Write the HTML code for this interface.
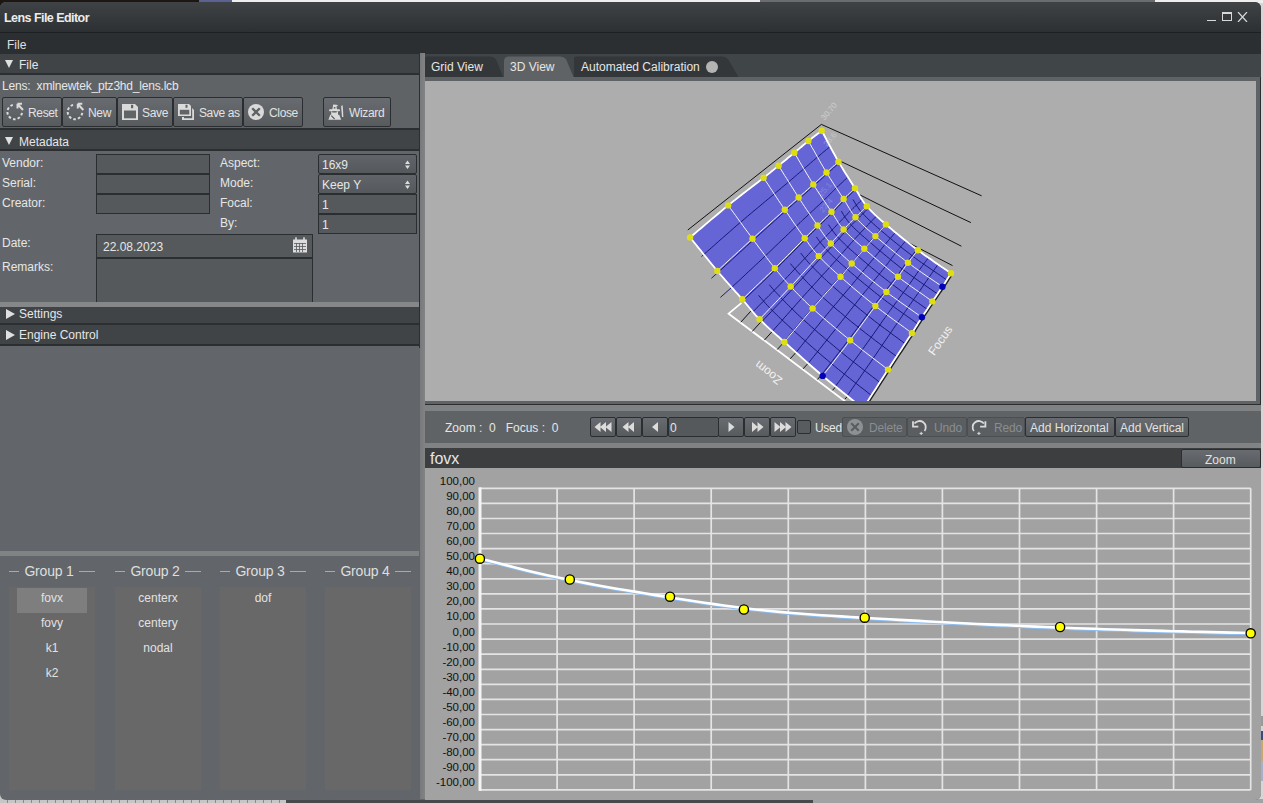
<!DOCTYPE html>
<html><head><meta charset="utf-8">
<style>
*{margin:0;padding:0;box-sizing:border-box}
html,body{width:1263px;height:803px;overflow:hidden;background:#d6d6d6;font-family:"Liberation Sans",sans-serif;font-size:12px;color:#e6e6e6}
.a{position:absolute}
#topstrip{left:0;top:0;width:1263px;height:3px;background:#1c1614}
#botstrip{left:0;top:799px;width:1263px;height:4px;background:#c9c9c9}
#win{left:0;top:2px;width:1261px;height:798px;background:#62666a;border-radius:6px 6px 6px 6px;overflow:hidden}
#title{left:0;top:0;width:1261px;height:31px;background:linear-gradient(#3f4346,#2c3033);border-bottom:1px solid #1d2022}
#title .t{left:4px;top:9px;font-weight:bold;font-size:12.5px;letter-spacing:-0.55px;color:#ececec}
#menu{left:0;top:31px;width:1261px;height:21px;background:#2b2f32}
#menu .t{left:7px;top:5px;color:#e0e0e0}
.hdr{background:#404447;border-bottom:2px solid #2c2f31;width:419px;left:0}
.hdr .t{left:19px;top:4px;color:#e6e6e6}
.tri{left:5px;top:6px;width:0;height:0;border-left:4.5px solid transparent;border-right:4.5px solid transparent;border-top:8px solid #e0e0e0}
.trir{left:6px;top:4px;width:0;height:0;border-top:5px solid transparent;border-bottom:5px solid transparent;border-left:9px solid #e0e0e0}
.btn{height:30px;top:95px;border:1px solid #2b2e30;border-radius:2px;background:linear-gradient(#686c70,#575b5e)}
.btn .t{top:8px;color:#e2e2e2;white-space:nowrap;letter-spacing:-0.35px}
.lbl{left:2px;color:#e6e6e6}
.dbtn{top:415px;height:20px;border:1px solid #4b4f52;border-radius:2px;background:#5a5e61}
.dbtn .t{top:3px;color:#8a8d90;letter-spacing:-0.2px}
.inp{background:#55595c;border:1px solid #2b2e30}
.combo{background:linear-gradient(#61656a,#55595c);border:1px solid #2b2e30;border-radius:2px}
</style></head><body>
<div class="a" style="left:0;top:0;width:199px;height:3px;background:#1d1713"></div>
<div class="a" style="left:0;top:0;width:10px;height:10px;background:#1d1713"></div>
<div class="a" style="left:0;top:790px;width:10px;height:13px;background:#c6c6c6"></div>
<div class="a" style="left:199px;top:0;width:33px;height:3px;background:#5b6190"></div>
<div class="a" style="left:232px;top:0;width:528px;height:3px;background:#eeeeee"></div>
<div class="a" style="left:760px;top:0;width:395px;height:3px;background:#6a6c70"></div>
<div class="a" style="left:1155px;top:0;width:108px;height:3px;background:#eeeeee"></div>
<div class="a" style="left:0;top:799px;width:286px;height:4px;background:repeating-linear-gradient(90deg,#c6c6c6 0,#c6c6c6 7px,#8c8c8c 7px,#8c8c8c 8px)"></div>
<div class="a" style="left:286px;top:799px;width:527px;height:4px;background:#47494b"></div>
<div class="a" style="left:813px;top:799px;width:450px;height:4px;background:#a0a2a4"></div>
<div class="a" style="left:1261px;top:716px;width:2px;height:10px;background:#9a9a9a"></div>
<div class="a" style="left:1261px;top:731px;width:2px;height:9px;background:#3c4a7a"></div>
<div class="a" style="left:1261px;top:740px;width:2px;height:21px;background:#c8a870"></div>
<div class="a" style="left:1261px;top:761px;width:2px;height:20px;background:#a8b0c8"></div>
<div class="a" id="win">
 <div class="a" id="title"><div class="a t">Lens File Editor</div>
  <div class="a" style="left:1207px;top:18px;width:9px;height:1px;background:#d8d8d8"></div>
  <div class="a" style="left:1222px;top:10px;width:10px;height:9px;border:1px solid #d8d8d8;border-top-width:2px"></div>
  <svg class="a" style="left:1237px;top:10px" width="11" height="10"><path d="M1,0 L10,10 M10,0 L1,10" stroke="#d8d8d8" stroke-width="1.2"/></svg>
 </div>
 <div class="a" id="menu"><div class="a t">File</div></div>
  <div class="a hdr" style="top:52px;height:21px"><div class="a tri"></div><div class="a t">File</div></div>
 <div class="a" style="left:0;top:73px;width:419px;height:22px;background:#5f6366"><div class="a lbl" style="top:4px;letter-spacing:-0.2px">Lens:&nbsp; xmlnewtek_ptz3hd_lens.lcb</div></div>
 <div class="a" style="left:0;top:95px;width:419px;height:31px;background:#5f6366"></div>
 <div class="a btn" style="left:2px;width:60px"><div class="a t" style="left:25px">Reset</div></div>
 <div class="a btn" style="left:62px;width:55px"><div class="a t" style="left:25px">New</div></div>
 <div class="a btn" style="left:117px;width:56px"><div class="a t" style="left:24px">Save</div></div>
 <div class="a btn" style="left:173px;width:70px"><div class="a t" style="left:25px;letter-spacing:-0.4px">Save as</div></div>
 <div class="a btn" style="left:243px;width:60px"><div class="a t" style="left:25px">Close</div></div>
 <div class="a btn" style="left:323px;width:68px"><div class="a t" style="left:25px">Wizard</div></div>
 <svg class="a" style="left:0;top:-2px" width="420" height="140">
  <g fill="none" stroke="#dadada" stroke-width="2">
   <path d="M12.8,104.9 A7.3,7.3 0 1 0 22,112.1" stroke-dasharray="2.6 2.1"/>
   <path d="M18,104.5 L23,110 M17.5,103.8 V108.5 M17.5,103.8 H22"/>
   <path d="M73.1,104.9 A7.3,7.3 0 1 0 82.3,112.1" stroke-dasharray="2.6 2.1"/>
   <path d="M78.3,104.5 L83.3,110 M77.8,103.8 V108.5 M77.8,103.8 H82.3"/>
  </g>
  <g fill="#dadada">
   <path d="M122,104 H135 L138,107 V120 H122 Z"/>
   <rect x="131" y="104.8" width="2.2" height="3.4" fill="#606467"/>
   <rect x="124" y="110.5" width="12" height="7.8" fill="#606467"/>
   <path d="M178,104 H189 L191,106 V116 H178 Z"/>
   <rect x="185.5" y="104.8" width="2" height="3" fill="#606467"/>
   <rect x="179.8" y="109.8" width="9.5" height="4.7" fill="#606467"/>
   <path d="M192,108 L194,110 V120 H182 V117 H184 V118.2 H192.2 V110.5 Z"/>
   <circle cx="256" cy="112" r="8"/>
   <path d="M332.2,110 L333.2,104.6 L336.5,104.8 L338.2,105.8 L336.4,106.4 L337.2,110 Z"/>
   <rect x="329" y="109.3" width="11" height="1.9" rx="0.9"/>
   <path d="M331.2,111.5 H338 V114.5 L334.6,118.8 L331.2,114.5 Z"/>
   <path d="M330.3,114.8 L328.4,119.8 H341.2 L339.2,114.8 Z"/>
   <path d="M341.1,106.2 L342.4,105 L342.8,106.8 L343.4,117 H342 Z"/>
  </g>
  <path d="M252.2,108.2 L259.8,115.8 M259.8,108.2 L252.2,115.8" stroke="#5e6265" stroke-width="2.3"/>
  <path d="M332.2,111.9 H336.6 M331.3,115.6 L334.6,119" stroke="#55595c" stroke-width="1.1" fill="none"/>
  <rect x="333.8" y="107" width="1.6" height="1.6" fill="#606467"/>
 </svg>
 <div class="a hdr" style="top:126px;height:23px;border-top:2px solid #2c2f31"><div class="a tri" style="top:7px"></div><div class="a t" style="top:5px">Metadata</div></div>
 <div class="a lbl" style="top:154px">Vendor:</div>
 <div class="a lbl" style="top:174px">Serial:</div>
 <div class="a lbl" style="top:194px">Creator:</div>
 <div class="a lbl" style="top:234px">Date:</div>
 <div class="a lbl" style="top:258px">Remarks:</div>
 <div class="a inp" style="left:96px;top:152px;width:114px;height:20px"></div>
 <div class="a inp" style="left:96px;top:172px;width:114px;height:20px"></div>
 <div class="a inp" style="left:96px;top:192px;width:114px;height:20px"></div>
 <div class="a inp" style="left:96px;top:232px;width:217px;height:24px"><div class="a" style="left:6px;top:5px">22.08.2023</div></div>
 <div class="a inp" style="left:96px;top:256px;width:217px;height:46px;border-bottom:none"></div>
 <div class="a lbl" style="left:220px;top:154px">Aspect:</div>
 <div class="a lbl" style="left:220px;top:174px">Mode:</div>
 <div class="a lbl" style="left:220px;top:194px">Focal:</div>
 <div class="a lbl" style="left:220px;top:214px">By:</div>
 <div class="a combo" style="left:318px;top:152px;width:99px;height:20px"><div class="a" style="left:3px;top:3px">16x9</div></div>
 <div class="a combo" style="left:318px;top:172px;width:99px;height:20px"><div class="a" style="left:3px;top:3px">Keep Y</div></div>
 <div class="a inp" style="left:318px;top:192px;width:99px;height:20px"><div class="a" style="left:3px;top:3px">1</div></div>
 <div class="a inp" style="left:318px;top:212px;width:99px;height:20px"><div class="a" style="left:3px;top:3px">1</div></div>
 <div class="a" style="left:0;top:300px;width:419px;height:5px;background:#858789"></div>
 <div class="a hdr" style="top:305px;height:18px"><div class="a trir" style="top:2px"></div><div class="a t" style="top:0px">Settings</div></div>
 <div class="a hdr" style="top:323px;height:21px"><div class="a trir" style="top:5px"></div><div class="a t" style="top:3px">Engine Control</div></div>
 <div class="a" style="left:0;top:549px;width:419px;height:5px;background:#808284"></div>
 <div class="a" style="left:420px;top:51px;width:5px;height:746px;background:linear-gradient(90deg,#77797b,#818385)"></div>
 <div class="a" style="left:419px;top:52px;width:1px;height:294px;background:#2b2f31"></div>
 <svg class="a" style="left:0;top:-2px" width="420" height="320">
  <g fill="#dcdcdc">
   <path d="M405,164 L407.5,160.5 L410,164 Z M405,165.5 L407.5,169 L410,165.5 Z"/>
   <path d="M405,184 L407.5,180.5 L410,184 Z M405,185.5 L407.5,189 L410,185.5 Z"/>
  </g>
  <g>
   <rect x="293" y="239.5" width="14" height="13" fill="#dcdcdc"/>
   <rect x="295.2" y="237.3" width="1.6" height="3" fill="#dcdcdc"/>
   <rect x="303.2" y="237.3" width="1.6" height="3" fill="#dcdcdc"/>
   <path d="M294,243.5 H306 M294,246.5 H306 M294,249.5 H306 M296.5,243 V252 M299.5,243 V252 M302.5,243 V252" stroke="#55595c" stroke-width="0.8"/>
  </g>
 </svg>
 <div class="a" style="left:9px;top:585px;width:86px;height:203px;background:#686869"></div>
 <div class="a" style="left:9px;top:569px;width:10px;height:1px;background:#a8aaab"></div>
 <div class="a" style="left:79px;top:569px;width:16px;height:1px;background:#a8aaab"></div>
 <div class="a" style="left:6px;top:561px;width:86px;text-align:center;font-size:14px;letter-spacing:-0.2px;color:#dedede">Group 1</div>
 <div class="a" style="left:17px;top:586px;width:70px;height:25px;background:#7e7e7e"></div>
 <div class="a" style="left:9px;top:589px;width:86px;text-align:center;color:#e2e2e2">fovx</div>
 <div class="a" style="left:9px;top:614px;width:86px;text-align:center;color:#e2e2e2">fovy</div>
 <div class="a" style="left:9px;top:639px;width:86px;text-align:center;color:#e2e2e2">k1</div>
 <div class="a" style="left:9px;top:664px;width:86px;text-align:center;color:#e2e2e2">k2</div>
 <div class="a" style="left:115px;top:585px;width:86px;height:203px;background:#686869"></div>
 <div class="a" style="left:115px;top:569px;width:10px;height:1px;background:#a8aaab"></div>
 <div class="a" style="left:185px;top:569px;width:16px;height:1px;background:#a8aaab"></div>
 <div class="a" style="left:112px;top:561px;width:86px;text-align:center;font-size:14px;letter-spacing:-0.2px;color:#dedede">Group 2</div>
 <div class="a" style="left:115px;top:589px;width:86px;text-align:center;color:#e2e2e2">centerx</div>
 <div class="a" style="left:115px;top:614px;width:86px;text-align:center;color:#e2e2e2">centery</div>
 <div class="a" style="left:115px;top:639px;width:86px;text-align:center;color:#e2e2e2">nodal</div>
 <div class="a" style="left:220px;top:585px;width:86px;height:203px;background:#686869"></div>
 <div class="a" style="left:220px;top:569px;width:10px;height:1px;background:#a8aaab"></div>
 <div class="a" style="left:290px;top:569px;width:16px;height:1px;background:#a8aaab"></div>
 <div class="a" style="left:217px;top:561px;width:86px;text-align:center;font-size:14px;letter-spacing:-0.2px;color:#dedede">Group 3</div>
 <div class="a" style="left:220px;top:589px;width:86px;text-align:center;color:#e2e2e2">dof</div>
 <div class="a" style="left:325px;top:585px;width:86px;height:203px;background:#686869"></div>
 <div class="a" style="left:325px;top:569px;width:10px;height:1px;background:#a8aaab"></div>
 <div class="a" style="left:395px;top:569px;width:16px;height:1px;background:#a8aaab"></div>
 <div class="a" style="left:322px;top:561px;width:86px;text-align:center;font-size:14px;letter-spacing:-0.2px;color:#dedede">Group 4</div>

  <div class="a" style="left:425px;top:52px;width:836px;height:23px;background:#404548"></div>
 <svg class="a" style="left:0;top:-2px" width="1263" height="803">
  <path d="M425,77 L425,58 Q425,56.5 427,56.5 L490,56.5 Q494,56.5 496,59 L503,77 Z" fill="#33373a"/>
  <path d="M574,77 L574,58 Q574,56.5 576,56.5 L722,56.5 Q726,56.5 728,59 L738.5,77 Z" fill="#33373a"/>
  <path d="M504,77 L504,61 Q504,56.5 509,56.5 L560,56.5 Q564,56.5 566,59 L573.5,77 Z" fill="#5f6366"/>
  <circle cx="712" cy="67" r="6" fill="#b4b4b4"/>
 </svg>
 <div class="a" style="left:431px;top:58px">Grid View</div>
 <div class="a" style="left:510px;top:58px">3D View</div>
 <div class="a" style="left:581px;top:58px">Automated Calibration</div>
 <div class="a" style="left:425px;top:75px;width:836px;height:328px;background:#5f6366;border-right:1px solid #2b2f31;border-bottom:1.5px solid #2b2f31"></div>
 <div class="a" style="left:425px;top:79px;width:831px;height:320px;background:#adadad;overflow:hidden">
  <svg class="a" style="left:-425px;top:-81px" width="1263" height="803">
  <g stroke="#111" stroke-width="1" fill="none">
   <path d="M687.8,230 L821.4,124.4 L981.6,195.8"/>
   <path d="M832,157.3 L970.9,222.6"/>
   <path d="M852,190.9 L961.4,246.2"/>
   <path d="M904.7,240.8 L952.5,265.6"/>
  </g>
  <path d="M741.5,302.9 L728.6,313.6 L852,406.5" stroke="#ffffff" stroke-width="1.8" fill="none"/>
<path d="M740.8,322.2 l10,-11 M752.2,331.5 l10,-11 M764.4,340.1 l10,-11 M777.3,349.5 l10,-11 M790.2,358.8 l10,-11 M803.1,368.8 l10,-11 M817.4,379.5 l10,-11 M832.5,390.3 l10,-11 M845.0,399.0 l10,-11" stroke="#111" stroke-width="1" fill="none"/>
  <path d="M951.0,273.3 L950.1,274.6 L949.3,276.0 L948.5,277.3 L947.6,278.6 L946.8,280.0 L945.9,281.3 L945.1,282.7 L944.2,284.0 L943.3,285.4 L942.4,286.8 L941.5,288.2 L940.5,289.6 L939.5,291.1 L938.5,292.5 L937.5,293.9 L936.5,295.4 L935.5,296.9 L934.5,298.4 L933.4,299.9 L932.4,301.4 L931.4,302.9 L930.3,304.5 L929.3,306.1 L928.2,307.7 L927.2,309.3 L926.1,310.9 L925.0,312.5 L924.0,314.1 L922.9,315.7 L921.9,317.3 L920.9,318.8 L920.1,320.1 L919.3,321.4 L918.5,322.6 L917.7,323.9 L916.9,325.3 L915.9,326.8 L914.8,328.6 L913.5,330.7 L911.9,333.1 L910.1,335.9 L908.0,339.0 L905.8,342.5 L903.4,346.1 L900.9,349.9 L898.3,353.8 L895.7,357.8 L893.1,361.8 L890.5,365.8 L888.0,369.6 L885.5,373.4 L883.1,377.2 L880.6,381.1 L878.1,385.0 L875.6,388.9 L873.1,392.8 L870.5,396.8 L868.0,400.7 L865.5,404.6 L863.0,408.5" stroke="#222" stroke-width="4.6" fill="none"/>
<path d="M821.7,130.7 L823.4,133.8 L825.1,137.0 L826.7,140.1 L828.4,143.3 L830.1,146.5 L831.8,149.6 L833.5,152.7 L835.2,155.8 L836.8,158.8 L838.5,161.7 L840.2,164.6 L841.9,167.4 L843.6,170.2 L845.3,173.0 L847.1,175.8 L848.8,178.4 L850.4,181.0 L852.0,183.5 L853.5,185.9 L855.0,188.2 L856.3,190.3 L857.5,192.3 L858.7,194.2 L859.7,196.0 L860.7,197.7 L861.8,199.4 L862.9,201.1 L864.0,202.7 L865.3,204.4 L866.8,206.2 L868.4,208.0 L869.9,209.7 L871.6,211.4 L873.3,213.1 L875.1,214.8 L877.0,216.6 L879.0,218.4 L881.1,220.3 L883.4,222.3 L885.9,224.4 L888.6,226.7 L891.5,229.1 L894.5,231.7 L897.7,234.3 L901.0,237.0 L904.4,239.7 L907.8,242.4 L911.2,245.1 L914.6,247.7 L917.9,250.2 L921.2,252.6 L924.4,255.0 L927.7,257.3 L931.1,259.6 L934.4,261.9 L937.7,264.2 L941.0,266.5 L944.4,268.7 L947.7,271.0 L951.0,273.3 L951.0,273.3 L950.1,274.6 L949.3,276.0 L948.5,277.3 L947.6,278.6 L946.8,280.0 L945.9,281.3 L945.1,282.7 L944.2,284.0 L943.3,285.4 L942.4,286.8 L941.5,288.2 L940.5,289.6 L939.5,291.1 L938.5,292.5 L937.5,293.9 L936.5,295.4 L935.5,296.9 L934.5,298.4 L933.4,299.9 L932.4,301.4 L931.4,302.9 L930.3,304.5 L929.3,306.1 L928.2,307.7 L927.2,309.3 L926.1,310.9 L925.0,312.5 L924.0,314.1 L922.9,315.7 L921.9,317.3 L920.9,318.8 L920.1,320.1 L919.3,321.4 L918.5,322.6 L917.7,323.9 L916.9,325.3 L915.9,326.8 L914.8,328.6 L913.5,330.7 L911.9,333.1 L910.1,335.9 L908.0,339.0 L905.8,342.5 L903.4,346.1 L900.9,349.9 L898.3,353.8 L895.7,357.8 L893.1,361.8 L890.5,365.8 L888.0,369.6 L885.5,373.4 L883.1,377.2 L880.6,381.1 L878.1,385.0 L875.6,388.9 L873.1,392.8 L870.5,396.8 L868.0,400.7 L865.5,404.6 L863.0,408.5 L863.0,408.5 L859.0,405.2 L854.9,402.0 L850.8,398.8 L846.8,395.5 L842.7,392.3 L838.7,389.0 L834.6,385.8 L830.6,382.5 L826.6,379.2 L822.7,375.9 L818.7,372.5 L814.7,369.0 L810.6,365.5 L806.6,361.9 L802.6,358.3 L798.7,354.8 L794.8,351.4 L791.2,348.1 L787.7,344.9 L784.4,342.0 L781.3,339.3 L778.5,336.7 L775.7,334.3 L773.1,332.0 L770.7,329.8 L768.3,327.6 L766.1,325.6 L763.9,323.5 L761.7,321.4 L759.6,319.3 L757.6,317.2 L755.8,315.3 L754.1,313.4 L752.5,311.5 L751.0,309.7 L749.4,307.8 L747.8,305.8 L746.1,303.8 L744.3,301.6 L742.3,299.3 L740.1,296.8 L737.8,294.2 L735.4,291.6 L733.0,288.8 L730.4,285.9 L727.8,283.0 L725.2,280.1 L722.6,277.0 L719.9,274.0 L717.3,270.9 L714.7,267.8 L712.0,264.5 L709.3,261.2 L706.6,257.9 L703.8,254.5 L701.1,251.0 L698.3,247.6 L695.6,244.2 L692.8,240.8 L690.1,237.4 L690.1,237.4 L693.9,234.2 L697.8,230.9 L701.6,227.7 L705.5,224.4 L709.3,221.1 L713.2,217.9 L717.0,214.7 L720.8,211.5 L724.5,208.4 L728.2,205.4 L731.9,202.4 L735.8,199.4 L739.7,196.3 L743.5,193.3 L747.3,190.4 L751.0,187.5 L754.6,184.8 L757.9,182.3 L760.9,179.9 L763.6,177.8 L765.9,176.0 L767.9,174.4 L769.6,173.1 L771.0,171.9 L772.3,170.8 L773.5,169.9 L774.7,168.9 L775.9,167.9 L777.2,166.9 L778.6,165.7 L780.1,164.4 L781.7,163.1 L783.3,161.8 L784.9,160.5 L786.5,159.2 L788.1,157.8 L789.7,156.5 L791.3,155.2 L792.8,154.0 L794.3,152.7 L795.8,151.5 L797.2,150.3 L798.7,149.1 L800.1,147.9 L801.5,146.7 L802.9,145.5 L804.3,144.4 L805.7,143.2 L807.0,142.1 L808.4,141.0 L809.8,139.9 L811.1,138.9 L812.4,137.8 L813.8,136.8 L815.1,135.8 L816.4,134.8 L817.7,133.7 L819.1,132.7 L820.4,131.7 L821.7,130.7Z" fill="#6565d5"/>
<path d="M830.1,146.5 L828.9,147.5 L827.6,148.6 L826.4,149.6 L825.1,150.7 L823.9,151.7 L822.6,152.7 L821.4,153.8 L820.1,154.9 L818.8,156.0 L817.5,157.1 L816.2,158.2 L814.9,159.3 L813.5,160.5 L812.2,161.6 L810.8,162.8 L809.5,164.0 L808.1,165.2 L806.7,166.4 L805.3,167.6 L803.8,168.8 L802.4,170.1 L800.9,171.4 L799.4,172.7 L797.8,174.0 L796.3,175.3 L794.8,176.6 L793.2,178.0 L791.7,179.3 L790.2,180.6 L788.7,181.8 L787.3,183.0 L786.1,184.1 L784.9,185.0 L783.8,186.0 L782.6,186.9 L781.4,188.0 L780.0,189.2 L778.4,190.5 L776.5,192.1 L774.3,194.0 L771.7,196.1 L768.8,198.5 L765.7,201.1 L762.3,203.9 L758.8,206.9 L755.1,209.9 L751.4,213.0 L747.7,216.1 L744.1,219.2 L740.5,222.3 L736.9,225.3 L733.3,228.5 L729.7,231.7 L726.0,234.9 L722.3,238.1 L718.6,241.4 L714.9,244.7 L711.2,248.0 L707.5,251.2 L703.8,254.5 M839.2,162.8 L838.0,163.9 L836.8,165.0 L835.6,166.1 L834.4,167.1 L833.3,168.2 L832.1,169.3 L830.9,170.3 L829.7,171.4 L828.5,172.5 L827.2,173.7 L825.9,174.8 L824.7,176.0 L823.4,177.1 L822.1,178.3 L820.8,179.5 L819.5,180.7 L818.1,181.9 L816.8,183.1 L815.4,184.3 L814.0,185.6 L812.6,186.9 L811.2,188.1 L809.7,189.5 L808.2,190.8 L806.8,192.1 L805.3,193.5 L803.8,194.8 L802.3,196.1 L800.8,197.4 L799.4,198.7 L798.1,199.9 L796.9,200.9 L795.8,201.9 L794.7,202.8 L793.6,203.8 L792.4,204.9 L791.1,206.0 L789.5,207.4 L787.7,209.0 L785.6,210.9 L783.2,213.1 L780.4,215.6 L777.4,218.3 L774.2,221.2 L770.9,224.2 L767.4,227.3 L763.9,230.5 L760.4,233.7 L756.9,236.9 L753.4,240.0 L750.0,243.0 L746.6,246.2 L743.1,249.4 L739.6,252.6 L736.1,255.9 L732.5,259.1 L729.0,262.4 L725.4,265.7 L721.9,268.9 L718.3,272.1 M847.9,177.1 L846.8,178.2 L845.6,179.2 L844.5,180.3 L843.3,181.3 L842.2,182.4 L841.0,183.5 L839.9,184.5 L838.7,185.6 L837.5,186.8 L836.3,187.9 L835.1,189.1 L833.9,190.3 L832.7,191.5 L831.5,192.7 L830.2,194.0 L829.0,195.2 L827.7,196.5 L826.4,197.8 L825.1,199.1 L823.8,200.4 L822.4,201.7 L821.0,203.0 L819.6,204.4 L818.1,205.7 L816.6,207.1 L815.2,208.4 L813.7,209.8 L812.3,211.2 L810.8,212.5 L809.4,213.8 L808.2,215.0 L807.0,216.1 L805.9,217.1 L804.9,218.0 L803.9,219.0 L802.7,220.1 L801.4,221.3 L800.0,222.7 L798.3,224.3 L796.2,226.3 L793.9,228.5 L791.2,231.1 L788.3,233.9 L785.3,236.8 L782.0,239.9 L778.7,243.1 L775.3,246.3 L771.9,249.6 L768.6,252.8 L765.3,255.9 L762.1,259.0 L758.8,262.1 L755.4,265.2 L752.1,268.4 L748.7,271.5 L745.3,274.7 L741.9,277.9 L738.5,281.1 L735.1,284.2 L731.7,287.4 M855.7,189.3 L854.6,190.4 L853.4,191.4 L852.3,192.5 L851.2,193.5 L850.0,194.6 L848.9,195.6 L847.8,196.7 L846.6,197.8 L845.5,198.9 L844.3,200.1 L843.1,201.3 L842.0,202.5 L840.8,203.8 L839.6,205.0 L838.4,206.3 L837.2,207.6 L836.0,208.9 L834.8,210.3 L833.5,211.6 L832.2,212.9 L830.9,214.2 L829.5,215.6 L828.1,217.0 L826.7,218.4 L825.3,219.8 L823.9,221.2 L822.4,222.6 L821.0,223.9 L819.6,225.3 L818.3,226.6 L817.0,227.9 L815.9,229.0 L814.9,230.0 L813.9,230.9 L812.9,232.0 L811.8,233.0 L810.6,234.3 L809.1,235.7 L807.5,237.4 L805.5,239.3 L803.2,241.6 L800.7,244.2 L797.9,247.0 L795.0,250.0 L791.9,253.2 L788.7,256.4 L785.4,259.7 L782.1,263.0 L778.9,266.2 L775.7,269.4 L772.6,272.4 L769.4,275.5 L766.2,278.6 L763.0,281.7 L759.7,284.9 L756.4,288.0 L753.1,291.1 L749.9,294.2 L746.6,297.4 L743.3,300.5 M862.0,199.7 L860.9,200.8 L859.7,201.9 L858.6,203.0 L857.5,204.0 L856.3,205.1 L855.2,206.2 L854.1,207.3 L852.9,208.4 L851.8,209.5 L850.6,210.7 L849.5,211.9 L848.3,213.0 L847.1,214.2 L845.9,215.5 L844.8,216.7 L843.6,218.0 L842.4,219.2 L841.1,220.5 L839.9,221.8 L838.6,223.1 L837.4,224.4 L836.1,225.8 L834.7,227.2 L833.4,228.6 L832.1,230.0 L830.7,231.4 L829.4,232.8 L828.0,234.2 L826.7,235.6 L825.4,237.0 L824.2,238.2 L823.2,239.3 L822.2,240.3 L821.2,241.2 L820.2,242.2 L819.1,243.3 L817.9,244.5 L816.6,245.9 L815.0,247.6 L813.1,249.6 L810.9,251.9 L808.4,254.5 L805.8,257.3 L803.0,260.3 L800.0,263.5 L796.9,266.7 L793.8,270.0 L790.7,273.3 L787.6,276.6 L784.5,279.8 L781.5,282.9 L778.4,286.1 L775.2,289.3 L772.1,292.5 L768.9,295.7 L765.6,299.0 L762.4,302.2 L759.2,305.4 L756.0,308.7 L752.8,311.9 M868.5,208.2 L867.4,209.3 L866.3,210.4 L865.2,211.5 L864.0,212.6 L862.9,213.7 L861.8,214.8 L860.7,215.9 L859.6,217.0 L858.4,218.1 L857.3,219.3 L856.1,220.5 L855.0,221.6 L853.8,222.8 L852.6,224.0 L851.4,225.2 L850.3,226.4 L849.1,227.7 L847.9,228.9 L846.7,230.2 L845.4,231.5 L844.2,232.8 L842.9,234.2 L841.7,235.6 L840.4,237.1 L839.1,238.5 L837.8,240.0 L836.5,241.4 L835.2,242.8 L833.9,244.2 L832.7,245.6 L831.5,246.8 L830.5,247.9 L829.5,248.9 L828.6,249.9 L827.6,250.9 L826.6,251.9 L825.4,253.1 L824.1,254.6 L822.5,256.2 L820.7,258.2 L818.6,260.5 L816.2,263.1 L813.6,266.0 L810.8,269.0 L807.9,272.2 L804.9,275.5 L801.9,278.8 L798.8,282.2 L795.7,285.5 L792.8,288.7 L789.8,291.9 L786.8,295.1 L783.7,298.4 L780.6,301.7 L777.5,305.0 L774.4,308.3 L771.3,311.7 L768.1,315.0 L765.0,318.3 L761.9,321.6 M876.4,216.0 L875.3,217.2 L874.2,218.3 L873.2,219.4 L872.1,220.6 L871.0,221.7 L869.9,222.8 L868.8,224.0 L867.7,225.1 L866.6,226.3 L865.5,227.4 L864.4,228.6 L863.3,229.8 L862.2,231.0 L861.0,232.2 L859.9,233.4 L858.8,234.7 L857.6,235.9 L856.4,237.2 L855.2,238.5 L854.0,239.8 L852.8,241.2 L851.6,242.6 L850.3,244.0 L849.0,245.5 L847.7,247.0 L846.4,248.5 L845.1,249.9 L843.8,251.4 L842.6,252.8 L841.3,254.2 L840.2,255.5 L839.2,256.6 L838.3,257.6 L837.4,258.6 L836.5,259.6 L835.6,260.8 L834.4,262.0 L833.1,263.4 L831.6,265.1 L829.8,267.2 L827.7,269.5 L825.3,272.2 L822.6,275.0 L819.8,278.1 L816.9,281.4 L813.9,284.7 L810.8,288.1 L807.7,291.5 L804.7,294.8 L801.8,298.1 L798.9,301.3 L796.0,304.6 L793.1,307.9 L790.1,311.2 L787.2,314.6 L784.2,317.9 L781.3,321.3 L778.3,324.6 L775.3,328.0 L772.4,331.3 M885.6,224.2 L884.6,225.3 L883.6,226.5 L882.5,227.7 L881.5,228.8 L880.4,230.0 L879.4,231.1 L878.3,232.3 L877.3,233.5 L876.2,234.7 L875.1,235.9 L874.1,237.1 L873.0,238.3 L871.9,239.5 L870.8,240.8 L869.7,242.0 L868.6,243.3 L867.5,244.6 L866.4,245.9 L865.2,247.2 L864.0,248.6 L862.8,250.0 L861.6,251.4 L860.3,252.9 L859.0,254.4 L857.7,255.9 L856.4,257.4 L855.1,258.9 L853.9,260.4 L852.6,261.8 L851.4,263.3 L850.3,264.6 L849.4,265.7 L848.5,266.8 L847.6,267.8 L846.8,268.8 L845.8,270.0 L844.8,271.3 L843.5,272.7 L842.0,274.5 L840.2,276.6 L838.1,279.0 L835.7,281.7 L833.1,284.6 L830.3,287.8 L827.3,291.1 L824.3,294.5 L821.2,297.9 L818.2,301.4 L815.2,304.8 L812.3,308.1 L809.5,311.4 L806.7,314.7 L803.9,318.1 L801.0,321.4 L798.2,324.8 L795.4,328.2 L792.6,331.6 L789.7,335.0 L786.9,338.4 L784.1,341.7 M895.5,232.4 L894.4,233.6 L893.4,234.8 L892.4,236.0 L891.4,237.2 L890.3,238.3 L889.3,239.5 L888.3,240.7 L887.2,241.9 L886.2,243.1 L885.2,244.4 L884.1,245.6 L883.1,246.9 L882.0,248.2 L881.0,249.5 L879.9,250.8 L878.9,252.1 L877.8,253.4 L876.7,254.8 L875.6,256.1 L874.4,257.5 L873.3,258.9 L872.0,260.4 L870.8,261.9 L869.6,263.4 L868.3,264.9 L867.0,266.4 L865.8,268.0 L864.5,269.4 L863.3,270.9 L862.1,272.4 L861.0,273.7 L860.1,274.8 L859.2,275.9 L858.3,277.0 L857.5,278.0 L856.5,279.2 L855.5,280.5 L854.2,282.0 L852.7,283.8 L851.0,285.9 L848.9,288.4 L846.6,291.1 L844.0,294.2 L841.3,297.4 L838.4,300.8 L835.5,304.3 L832.5,307.8 L829.5,311.4 L826.6,314.9 L823.8,318.3 L821.0,321.6 L818.3,325.0 L815.5,328.4 L812.7,331.8 L809.9,335.2 L807.1,338.7 L804.3,342.1 L801.5,345.6 L798.8,349.0 L796.0,352.4 M905.8,240.8 L904.7,242.0 L903.7,243.2 L902.7,244.4 L901.7,245.6 L900.7,246.8 L899.7,248.0 L898.7,249.2 L897.6,250.5 L896.6,251.7 L895.6,253.0 L894.6,254.3 L893.6,255.6 L892.6,256.9 L891.6,258.3 L890.6,259.6 L889.5,261.0 L888.5,262.4 L887.5,263.8 L886.4,265.2 L885.3,266.6 L884.1,268.1 L883.0,269.5 L881.8,271.0 L880.6,272.5 L879.3,274.1 L878.1,275.6 L876.9,277.1 L875.6,278.6 L874.4,280.1 L873.3,281.5 L872.2,282.9 L871.2,284.1 L870.4,285.1 L869.5,286.2 L868.6,287.3 L867.7,288.4 L866.6,289.8 L865.4,291.3 L863.9,293.1 L862.2,295.3 L860.2,297.8 L857.9,300.7 L855.5,303.8 L852.8,307.1 L850.1,310.6 L847.3,314.2 L844.4,317.9 L841.5,321.5 L838.7,325.1 L835.9,328.6 L833.2,332.0 L830.5,335.4 L827.7,338.9 L824.9,342.4 L822.2,345.9 L819.4,349.4 L816.6,352.9 L813.8,356.4 L811.0,359.8 L808.2,363.3 M916.9,249.5 L915.9,250.7 L914.9,251.9 L913.9,253.2 L913.0,254.4 L912.0,255.6 L911.0,256.8 L910.0,258.1 L909.0,259.3 L908.0,260.6 L907.0,261.9 L906.0,263.3 L905.0,264.6 L904.0,266.0 L903.1,267.4 L902.1,268.8 L901.1,270.2 L900.1,271.7 L899.1,273.1 L898.0,274.5 L897.0,276.0 L895.9,277.5 L894.7,279.0 L893.6,280.5 L892.4,282.0 L891.2,283.5 L890.0,285.1 L888.8,286.6 L887.7,288.1 L886.5,289.6 L885.3,291.1 L884.3,292.4 L883.3,293.6 L882.4,294.7 L881.6,295.8 L880.7,296.9 L879.7,298.1 L878.7,299.5 L877.4,301.1 L876.0,302.9 L874.3,305.1 L872.4,307.8 L870.2,310.7 L867.8,313.9 L865.3,317.3 L862.7,320.9 L859.9,324.6 L857.2,328.4 L854.4,332.1 L851.6,335.8 L849.0,339.4 L846.3,342.9 L843.6,346.4 L840.9,349.9 L838.1,353.5 L835.4,357.1 L832.6,360.6 L829.8,364.2 L827.0,367.8 L824.3,371.3 L821.5,374.9 M928.4,257.8 L927.5,259.1 L926.5,260.3 L925.6,261.6 L924.6,262.8 L923.7,264.1 L922.7,265.4 L921.8,266.6 L920.8,267.9 L919.8,269.3 L918.9,270.6 L917.9,272.0 L916.9,273.3 L916.0,274.8 L915.0,276.2 L914.0,277.6 L913.0,279.0 L912.0,280.5 L911.0,282.0 L910.0,283.4 L909.0,284.9 L907.9,286.4 L906.8,287.9 L905.7,289.5 L904.5,291.0 L903.4,292.6 L902.2,294.1 L901.1,295.7 L899.9,297.2 L898.8,298.7 L897.7,300.2 L896.7,301.6 L895.7,302.9 L894.9,304.0 L894.0,305.2 L893.2,306.3 L892.2,307.6 L891.2,309.0 L890.0,310.6 L888.6,312.5 L887.0,314.8 L885.1,317.5 L882.9,320.5 L880.6,323.8 L878.2,327.3 L875.6,331.0 L872.9,334.8 L870.2,338.6 L867.5,342.4 L864.8,346.2 L862.2,349.9 L859.6,353.5 L857.0,357.1 L854.3,360.7 L851.6,364.4 L848.9,368.1 L846.2,371.7 L843.5,375.4 L840.8,379.1 L838.1,382.8 L835.4,386.4 M938.0,264.4 L937.1,265.7 L936.2,267.0 L935.3,268.3 L934.4,269.6 L933.5,270.9 L932.6,272.2 L931.7,273.5 L930.8,274.8 L929.8,276.2 L928.9,277.5 L927.9,278.9 L927.0,280.3 L926.0,281.7 L925.0,283.1 L924.0,284.6 L923.0,286.0 L922.0,287.5 L921.0,289.0 L920.0,290.5 L919.0,292.0 L917.9,293.5 L916.8,295.0 L915.7,296.6 L914.6,298.1 L913.5,299.7 L912.4,301.3 L911.3,302.9 L910.2,304.4 L909.1,306.0 L908.0,307.5 L907.0,309.0 L906.1,310.3 L905.3,311.4 L904.5,312.6 L903.6,313.8 L902.7,315.1 L901.7,316.6 L900.6,318.3 L899.2,320.3 L897.6,322.6 L895.7,325.4 L893.6,328.4 L891.4,331.8 L888.9,335.3 L886.4,339.1 L883.7,342.9 L881.1,346.8 L878.4,350.7 L875.8,354.6 L873.2,358.3 L870.7,362.0 L868.1,365.7 L865.5,369.4 L862.9,373.2 L860.3,377.0 L857.7,380.7 L855.0,384.5 L852.4,388.3 L849.8,392.1 L847.2,395.8 M703.8,254.5 L701.5,256.5 M718.3,272.1 L711.4,278.3 M731.7,287.4 L720.4,297.4 M853.0,199.5 L854.0,201.2 L854.9,202.8 L855.9,204.4 L856.9,206.0 L858.0,207.5 L859.1,209.1 L860.4,210.7 L861.8,212.4 L863.3,214.1 L864.8,215.7 L866.4,217.3 L868.0,218.9 L869.7,220.5 L871.5,222.1 L873.4,223.8 L875.4,225.6 L877.5,227.5 L879.8,229.4 L882.2,231.5 L884.8,233.7 L887.6,236.1 L890.5,238.5 L893.5,241.0 L896.6,243.5 L899.8,246.0 L902.9,248.6 L906.1,251.1 L909.3,253.5 L912.4,255.9 L915.4,258.2 L918.5,260.5 L921.6,262.7 L924.8,264.9 L927.9,267.0 L931.1,269.2 L934.2,271.3 L937.4,273.5 L940.5,275.6 L943.7,277.8 L946.8,280.0 M841.4,211.2 L842.4,212.9 L843.4,214.5 L844.3,216.0 L845.3,217.5 L846.4,219.1 L847.5,220.6 L848.8,222.3 L850.3,224.0 L851.8,225.6 L853.4,227.3 L855.0,228.9 L856.7,230.5 L858.5,232.2 L860.4,233.9 L862.4,235.7 L864.5,237.5 L866.7,239.4 L869.1,241.5 L871.6,243.6 L874.2,245.9 L877.1,248.4 L880.1,250.9 L883.2,253.5 L886.4,256.2 L889.6,258.8 L892.8,261.5 L896.1,264.1 L899.3,266.7 L902.5,269.1 L905.6,271.5 L908.8,273.8 L912.0,276.1 L915.1,278.4 L918.3,280.6 L921.5,282.9 L924.7,285.1 L927.9,287.3 L931.1,289.5 L934.3,291.7 L937.5,293.9 M828.5,224.7 L829.6,226.3 L830.6,227.8 L831.6,229.3 L832.6,230.8 L833.8,232.3 L835.0,233.9 L836.4,235.5 L837.9,237.2 L839.5,238.9 L841.1,240.6 L842.8,242.3 L844.5,244.0 L846.3,245.7 L848.2,247.5 L850.2,249.3 L852.4,251.2 L854.6,253.2 L857.1,255.3 L859.6,257.5 L862.4,259.9 L865.4,262.4 L868.5,265.1 L871.7,267.8 L875.0,270.5 L878.3,273.3 L881.7,276.0 L885.1,278.7 L888.4,281.3 L891.7,283.9 L894.9,286.3 L898.1,288.7 L901.3,291.1 L904.5,293.4 L907.7,295.7 L911.0,297.9 L914.2,300.2 L917.5,302.5 L920.7,304.7 L923.9,307.0 L927.2,309.3 M816.3,236.9 L817.5,238.5 L818.6,240.1 L819.7,241.6 L820.8,243.1 L822.1,244.6 L823.4,246.1 L824.8,247.8 L826.4,249.5 L828.0,251.3 L829.7,253.0 L831.4,254.8 L833.2,256.5 L835.1,258.3 L837.1,260.2 L839.1,262.0 L841.3,264.0 L843.6,266.1 L846.1,268.2 L848.7,270.5 L851.5,273.0 L854.5,275.5 L857.6,278.2 L860.9,280.9 L864.2,283.7 L867.6,286.4 L871.0,289.2 L874.4,292.0 L877.8,294.7 L881.1,297.3 L884.4,299.8 L887.7,302.3 L891.0,304.7 L894.3,307.2 L897.7,309.6 L901.0,312.0 L904.4,314.3 L907.7,316.7 L911.1,319.1 L914.4,321.5 L917.7,323.9 M800.7,253.0 L801.9,254.6 L803.1,256.1 L804.3,257.6 L805.5,259.1 L806.8,260.6 L808.2,262.2 L809.7,263.8 L811.4,265.6 L813.1,267.4 L814.8,269.2 L816.6,271.0 L818.4,272.8 L820.3,274.7 L822.3,276.6 L824.4,278.6 L826.6,280.6 L828.9,282.8 L831.5,285.0 L834.1,287.4 L837.0,289.9 L840.1,292.6 L843.3,295.4 L846.7,298.2 L850.1,301.1 L853.6,304.0 L857.1,306.9 L860.6,309.8 L864.1,312.6 L867.5,315.4 L870.8,318.0 L874.2,320.7 L877.6,323.3 L881.0,325.8 L884.4,328.4 L887.9,330.9 L891.3,333.5 L894.7,336.0 L898.2,338.5 L901.6,341.1 L905.0,343.6 M790.4,263.6 L791.7,265.2 L793.0,266.7 L794.3,268.2 L795.6,269.7 L796.9,271.2 L798.4,272.8 L799.9,274.5 L801.6,276.3 L803.3,278.1 L805.0,280.0 L806.7,281.8 L808.5,283.6 L810.4,285.5 L812.4,287.5 L814.4,289.5 L816.6,291.6 L819.0,293.8 L821.5,296.1 L824.3,298.6 L827.2,301.2 L830.4,304.0 L833.7,306.8 L837.1,309.8 L840.7,312.7 L844.3,315.8 L847.9,318.8 L851.5,321.8 L855.1,324.7 L858.6,327.5 L862.0,330.2 L865.4,332.9 L868.9,335.6 L872.3,338.2 L875.8,340.9 L879.3,343.5 L882.7,346.1 L886.2,348.7 L889.6,351.3 L893.1,353.9 L896.6,356.5 M769.4,284.8 L770.8,286.5 L772.2,288.1 L773.5,289.6 L774.9,291.2 L776.4,292.8 L777.9,294.4 L779.6,296.2 L781.3,298.1 L783.1,299.9 L784.9,301.8 L786.8,303.7 L788.7,305.6 L790.6,307.5 L792.6,309.5 L794.8,311.6 L797.1,313.8 L799.5,316.1 L802.2,318.5 L805.0,321.1 L808.1,323.8 L811.3,326.7 L814.8,329.7 L818.3,332.8 L822.0,335.9 L825.7,339.1 L829.4,342.3 L833.2,345.4 L836.8,348.5 L840.5,351.5 L844.0,354.4 L847.5,357.3 L851.1,360.1 L854.7,362.9 L858.3,365.7 L861.8,368.5 L865.4,371.3 L869.0,374.0 L872.6,376.8 L876.2,379.6 L879.7,382.4 M758.6,295.3 L760.0,297.0 L761.5,298.7 L762.9,300.4 L764.3,302.0 L765.8,303.7 L767.3,305.4 L769.0,307.2 L770.9,309.1 L772.8,311.0 L774.7,312.9 L776.6,314.8 L778.6,316.7 L780.7,318.7 L782.8,320.7 L785.1,322.8 L787.5,325.0 L790.0,327.3 L792.7,329.8 L795.6,332.4 L798.7,335.1 L802.0,338.1 L805.5,341.1 L809.0,344.3 L812.7,347.5 L816.4,350.7 L820.1,354.0 L823.9,357.2 L827.6,360.3 L831.2,363.4 L834.8,366.4 L838.4,369.4 L842.1,372.3 L845.7,375.2 L849.4,378.1 L853.0,381.0 L856.7,383.9 L860.4,386.8 L864.1,389.6 L867.7,392.5 L871.4,395.4" fill="none" stroke="#10106e" stroke-width="0.9"/>
<path d="M821.7,130.7 L820.4,131.7 L819.1,132.7 L817.7,133.7 L816.4,134.8 L815.1,135.8 L813.8,136.8 L812.4,137.8 L811.1,138.9 L809.8,139.9 L808.4,141.0 L807.0,142.1 L805.7,143.2 L804.3,144.4 L802.9,145.5 L801.5,146.7 L800.1,147.9 L798.7,149.1 L797.2,150.3 L795.8,151.5 L794.3,152.7 L792.8,154.0 L791.3,155.2 L789.7,156.5 L788.1,157.8 L786.5,159.2 L784.9,160.5 L783.3,161.8 L781.7,163.1 L780.1,164.4 L778.6,165.7 L777.2,166.9 L775.9,167.9 L774.7,168.9 L773.5,169.9 L772.3,170.8 L771.0,171.9 L769.6,173.1 L767.9,174.4 L765.9,176.0 L763.6,177.8 L760.9,179.9 L757.9,182.3 L754.6,184.8 L751.0,187.5 L747.3,190.4 L743.5,193.3 L739.7,196.3 L735.8,199.4 L731.9,202.4 L728.2,205.4 L724.5,208.4 L720.8,211.5 L717.0,214.7 L713.2,217.9 L709.3,221.1 L705.5,224.4 L701.6,227.7 L697.8,230.9 L693.9,234.2 L690.1,237.4 M838.5,161.7 L837.3,162.8 L836.1,163.8 L834.9,164.9 L833.8,166.0 L832.6,167.0 L831.4,168.1 L830.2,169.2 L829.0,170.3 L827.7,171.4 L826.5,172.5 L825.2,173.6 L824.0,174.8 L822.7,176.0 L821.4,177.1 L820.1,178.3 L818.7,179.5 L817.4,180.7 L816.1,181.9 L814.7,183.2 L813.3,184.4 L811.9,185.7 L810.4,187.0 L809.0,188.3 L807.5,189.6 L806.0,190.9 L804.5,192.3 L803.0,193.6 L801.5,194.9 L800.0,196.2 L798.6,197.5 L797.3,198.7 L796.1,199.7 L795.0,200.7 L793.9,201.6 L792.8,202.6 L791.6,203.7 L790.3,204.8 L788.7,206.2 L786.9,207.8 L784.8,209.7 L782.3,211.9 L779.6,214.4 L776.6,217.1 L773.4,219.9 L770.0,223.0 L766.5,226.1 L763.0,229.2 L759.4,232.4 L755.9,235.6 L752.5,238.7 L749.1,241.8 L745.6,244.9 L742.2,248.1 L738.6,251.3 L735.1,254.6 L731.5,257.9 L728.0,261.1 L724.4,264.4 L720.8,267.7 L717.3,270.9 M855.0,188.2 L853.9,189.3 L852.7,190.3 L851.6,191.4 L850.5,192.4 L849.3,193.5 L848.2,194.5 L847.1,195.6 L845.9,196.7 L844.8,197.8 L843.6,199.0 L842.4,200.2 L841.3,201.4 L840.1,202.7 L838.9,203.9 L837.7,205.2 L836.5,206.5 L835.3,207.8 L834.1,209.2 L832.8,210.5 L831.5,211.8 L830.2,213.1 L828.8,214.5 L827.4,215.9 L826.0,217.3 L824.5,218.7 L823.1,220.0 L821.7,221.4 L820.3,222.8 L818.9,224.2 L817.5,225.5 L816.2,226.7 L815.1,227.8 L814.1,228.8 L813.1,229.8 L812.1,230.8 L811.0,231.9 L809.8,233.1 L808.3,234.6 L806.7,236.2 L804.7,238.2 L802.4,240.5 L799.9,243.1 L797.1,245.9 L794.1,248.9 L791.0,252.1 L787.8,255.3 L784.5,258.6 L781.2,261.9 L778.0,265.1 L774.8,268.2 L771.7,271.3 L768.5,274.3 L765.2,277.4 L762.0,280.6 L758.7,283.7 L755.4,286.8 L752.1,289.9 L748.8,293.1 L745.6,296.2 L742.3,299.3 M866.8,206.2 L865.7,207.3 L864.5,208.4 L863.4,209.5 L862.3,210.6 L861.2,211.7 L860.1,212.8 L858.9,213.9 L857.8,215.0 L856.7,216.1 L855.5,217.3 L854.3,218.5 L853.2,219.6 L852.0,220.8 L850.8,222.0 L849.6,223.2 L848.5,224.4 L847.3,225.7 L846.0,226.9 L844.8,228.2 L843.6,229.5 L842.4,230.8 L841.1,232.2 L839.8,233.6 L838.5,235.0 L837.2,236.5 L835.9,237.9 L834.6,239.3 L833.3,240.8 L832.1,242.1 L830.8,243.5 L829.6,244.7 L828.6,245.8 L827.6,246.8 L826.7,247.8 L825.7,248.8 L824.7,249.8 L823.5,251.1 L822.1,252.5 L820.6,254.1 L818.7,256.1 L816.6,258.4 L814.2,261.0 L811.6,263.8 L808.8,266.9 L805.9,270.0 L802.9,273.3 L799.8,276.6 L796.8,280.0 L793.7,283.3 L790.7,286.5 L787.7,289.7 L784.7,292.9 L781.6,296.2 L778.5,299.4 L775.3,302.8 L772.2,306.1 L769.0,309.4 L765.9,312.7 L762.7,316.0 L759.6,319.3 M885.9,224.4 L884.9,225.6 L883.8,226.7 L882.8,227.9 L881.7,229.0 L880.7,230.2 L879.6,231.3 L878.6,232.5 L877.5,233.7 L876.5,234.9 L875.4,236.1 L874.3,237.3 L873.2,238.5 L872.2,239.8 L871.1,241.0 L870.0,242.3 L868.9,243.5 L867.8,244.8 L866.6,246.1 L865.5,247.4 L864.3,248.8 L863.1,250.2 L861.9,251.6 L860.6,253.1 L859.3,254.6 L858.0,256.1 L856.7,257.6 L855.4,259.1 L854.2,260.6 L852.9,262.1 L851.7,263.5 L850.6,264.8 L849.6,266.0 L848.8,267.0 L847.9,268.0 L847.1,269.1 L846.1,270.2 L845.0,271.5 L843.8,273.0 L842.3,274.7 L840.5,276.8 L838.4,279.2 L836.0,281.9 L833.4,284.9 L830.6,288.0 L827.6,291.3 L824.6,294.7 L821.5,298.2 L818.5,301.7 L815.5,305.1 L812.6,308.4 L809.8,311.7 L807.0,315.0 L804.2,318.3 L801.3,321.7 L798.5,325.1 L795.7,328.5 L792.9,331.9 L790.0,335.2 L787.2,338.6 L784.4,342.0 M917.9,250.2 L916.9,251.4 L915.9,252.7 L914.9,253.9 L913.9,255.1 L913.0,256.4 L912.0,257.6 L911.0,258.8 L910.0,260.1 L909.0,261.4 L908.0,262.7 L907.0,264.0 L906.0,265.4 L905.1,266.8 L904.1,268.2 L903.1,269.6 L902.1,271.0 L901.1,272.4 L900.1,273.9 L899.1,275.3 L898.0,276.8 L896.9,278.3 L895.8,279.8 L894.6,281.3 L893.4,282.8 L892.3,284.4 L891.1,285.9 L889.9,287.4 L888.7,288.9 L887.5,290.4 L886.4,291.9 L885.3,293.3 L884.4,294.5 L883.5,295.6 L882.6,296.6 L881.8,297.8 L880.8,299.0 L879.7,300.3 L878.5,301.9 L877.1,303.8 L875.4,306.0 L873.5,308.6 L871.3,311.5 L868.9,314.8 L866.4,318.2 L863.8,321.8 L861.1,325.5 L858.3,329.3 L855.5,333.0 L852.8,336.7 L850.1,340.3 L847.4,343.8 L844.8,347.3 L842.0,350.9 L839.3,354.4 L836.5,358.0 L833.8,361.6 L831.0,365.2 L828.2,368.8 L825.4,372.3 L822.7,375.9 M951.0,273.3 L950.1,274.6 L949.3,276.0 L948.5,277.3 L947.6,278.6 L946.8,280.0 L945.9,281.3 L945.1,282.7 L944.2,284.0 L943.3,285.4 L942.4,286.8 L941.5,288.2 L940.5,289.6 L939.5,291.1 L938.5,292.5 L937.5,293.9 L936.5,295.4 L935.5,296.9 L934.5,298.4 L933.4,299.9 L932.4,301.4 L931.4,302.9 L930.3,304.5 L929.3,306.1 L928.2,307.7 L927.2,309.3 L926.1,310.9 L925.0,312.5 L924.0,314.1 L922.9,315.7 L921.9,317.3 L920.9,318.8 L920.1,320.1 L919.3,321.4 L918.5,322.6 L917.7,323.9 L916.9,325.3 L915.9,326.8 L914.8,328.6 L913.5,330.7 L911.9,333.1 L910.1,335.9 L908.0,339.0 L905.8,342.5 L903.4,346.1 L900.9,349.9 L898.3,353.8 L895.7,357.8 L893.1,361.8 L890.5,365.8 L888.0,369.6 L885.5,373.4 L883.1,377.2 L880.6,381.1 L878.1,385.0 L875.6,388.9 L873.1,392.8 L870.5,396.8 L868.0,400.7 L865.5,404.6 L863.0,408.5 M821.7,130.7 L823.4,133.8 L825.1,137.0 L826.7,140.1 L828.4,143.3 L830.1,146.5 L831.8,149.6 L833.5,152.7 L835.2,155.8 L836.8,158.8 L838.5,161.7 L840.2,164.6 L841.9,167.4 L843.6,170.2 L845.3,173.0 L847.1,175.8 L848.8,178.4 L850.4,181.0 L852.0,183.5 L853.5,185.9 L855.0,188.2 L856.3,190.3 L857.5,192.3 L858.7,194.2 L859.7,196.0 L860.7,197.7 L861.8,199.4 L862.9,201.1 L864.0,202.7 L865.3,204.4 L866.8,206.2 L868.4,208.0 L869.9,209.7 L871.6,211.4 L873.3,213.1 L875.1,214.8 L877.0,216.6 L879.0,218.4 L881.1,220.3 L883.4,222.3 L885.9,224.4 L888.6,226.7 L891.5,229.1 L894.5,231.7 L897.7,234.3 L901.0,237.0 L904.4,239.7 L907.8,242.4 L911.2,245.1 L914.6,247.7 L917.9,250.2 L921.2,252.6 L924.4,255.0 L927.7,257.3 L931.1,259.6 L934.4,261.9 L937.7,264.2 L941.0,266.5 L944.4,268.7 L947.7,271.0 L951.0,273.3 M808.4,141.0 L810.2,144.2 L812.0,147.4 L813.9,150.6 L815.7,153.8 L817.5,157.1 L819.3,160.3 L821.1,163.4 L822.9,166.5 L824.7,169.6 L826.5,172.5 L828.3,175.4 L830.1,178.3 L831.9,181.1 L833.7,183.9 L835.4,186.6 L837.2,189.2 L838.9,191.8 L840.5,194.3 L842.1,196.7 L843.6,199.0 L845.0,201.2 L846.2,203.2 L847.3,205.1 L848.4,206.9 L849.4,208.6 L850.4,210.3 L851.5,212.0 L852.7,213.7 L854.0,215.5 L855.5,217.3 L857.1,219.1 L858.8,220.9 L860.5,222.7 L862.3,224.4 L864.2,226.2 L866.1,228.0 L868.2,229.9 L870.5,231.8 L872.9,233.9 L875.4,236.1 L878.1,238.5 L881.1,241.0 L884.2,243.6 L887.4,246.3 L890.8,249.1 L894.2,251.9 L897.7,254.7 L901.2,257.4 L904.6,260.1 L908.0,262.7 L911.4,265.2 L914.8,267.7 L918.2,270.1 L921.6,272.5 L925.1,274.9 L928.6,277.3 L932.0,279.6 L935.5,282.0 L939.0,284.4 L942.4,286.8 M794.3,152.7 L796.2,155.9 L798.1,159.1 L800.0,162.3 L801.9,165.6 L803.8,168.8 L805.8,172.0 L807.7,175.2 L809.6,178.3 L811.4,181.4 L813.3,184.4 L815.2,187.4 L817.1,190.3 L819.0,193.2 L820.9,196.1 L822.8,199.0 L824.7,201.7 L826.5,204.4 L828.3,207.0 L829.9,209.5 L831.5,211.8 L832.9,214.0 L834.2,215.9 L835.3,217.8 L836.4,219.5 L837.4,221.2 L838.4,222.8 L839.5,224.4 L840.7,226.0 L842.1,227.7 L843.6,229.5 L845.3,231.3 L847.0,233.1 L848.8,234.9 L850.6,236.7 L852.6,238.5 L854.7,240.4 L856.9,242.3 L859.2,244.4 L861.7,246.5 L864.3,248.8 L867.1,251.3 L870.2,253.9 L873.4,256.7 L876.8,259.5 L880.3,262.5 L883.8,265.4 L887.4,268.4 L891.0,271.3 L894.5,274.1 L898.0,276.8 L901.4,279.4 L904.8,281.9 L908.3,284.4 L911.7,286.9 L915.2,289.3 L918.6,291.7 L922.1,294.1 L925.5,296.5 L929.0,299.0 L932.4,301.4 M778.6,165.7 L780.6,168.9 L782.6,172.1 L784.6,175.4 L786.7,178.6 L788.7,181.8 L790.7,185.1 L792.7,188.2 L794.7,191.4 L796.6,194.5 L798.6,197.5 L800.6,200.5 L802.5,203.5 L804.5,206.5 L806.5,209.5 L808.5,212.4 L810.4,215.2 L812.3,218.0 L814.1,220.6 L815.8,223.1 L817.5,225.5 L819.0,227.7 L820.4,229.7 L821.7,231.6 L822.9,233.3 L824.0,235.0 L825.2,236.6 L826.4,238.3 L827.7,239.9 L829.2,241.7 L830.8,243.5 L832.5,245.4 L834.3,247.2 L836.1,249.1 L838.0,251.0 L839.9,252.8 L842.0,254.8 L844.2,256.8 L846.5,258.9 L849.0,261.2 L851.7,263.5 L854.6,266.0 L857.7,268.7 L861.1,271.5 L864.5,274.4 L868.1,277.4 L871.8,280.4 L875.5,283.3 L879.2,286.3 L882.8,289.1 L886.4,291.9 L889.9,294.6 L893.4,297.2 L897.0,299.7 L900.5,302.3 L904.1,304.8 L907.7,307.3 L911.2,309.8 L914.8,312.3 L918.3,314.8 L921.9,317.3 M763.6,177.8 L765.7,181.0 L767.9,184.2 L770.0,187.5 L772.1,190.7 L774.3,194.0 L776.4,197.2 L778.5,200.4 L780.6,203.5 L782.7,206.6 L784.8,209.7 L786.9,212.7 L789.0,215.8 L791.1,218.8 L793.1,221.9 L795.2,224.8 L797.2,227.7 L799.2,230.5 L801.1,233.2 L803.0,235.8 L804.7,238.2 L806.3,240.4 L807.8,242.4 L809.1,244.3 L810.4,246.0 L811.6,247.6 L812.8,249.2 L814.1,250.9 L815.5,252.5 L817.0,254.2 L818.7,256.1 L820.5,258.0 L822.4,259.9 L824.3,261.8 L826.2,263.8 L828.3,265.7 L830.5,267.8 L832.8,269.9 L835.2,272.1 L837.8,274.4 L840.5,276.8 L843.5,279.4 L846.6,282.1 L850.0,285.0 L853.4,288.0 L857.0,291.0 L860.7,294.1 L864.4,297.1 L868.1,300.2 L871.8,303.1 L875.4,306.0 L879.0,308.8 L882.6,311.6 L886.2,314.3 L889.9,317.0 L893.5,319.7 L897.2,322.4 L900.9,325.0 L904.6,327.7 L908.2,330.4 L911.9,333.1 M728.2,205.4 L730.6,208.7 L733.1,212.1 L735.6,215.5 L738.0,218.9 L740.5,222.3 L742.9,225.7 L745.4,229.0 L747.8,232.3 L750.2,235.5 L752.5,238.7 L754.8,241.9 L757.2,245.0 L759.5,248.2 L761.9,251.3 L764.2,254.4 L766.4,257.4 L768.6,260.3 L770.8,263.1 L772.8,265.7 L774.8,268.2 L776.6,270.5 L778.3,272.5 L779.9,274.4 L781.3,276.2 L782.8,277.8 L784.2,279.5 L785.7,281.1 L787.2,282.8 L788.9,284.6 L790.7,286.5 L792.6,288.5 L794.4,290.5 L796.3,292.5 L798.3,294.5 L800.3,296.6 L802.4,298.7 L804.7,301.0 L807.1,303.3 L809.8,305.8 L812.6,308.4 L815.7,311.2 L819.1,314.2 L822.7,317.3 L826.5,320.6 L830.4,323.9 L834.3,327.2 L838.3,330.6 L842.3,333.9 L846.3,337.2 L850.1,340.3 L853.9,343.3 L857.7,346.3 L861.4,349.3 L865.2,352.2 L869.0,355.1 L872.8,358.0 L876.6,360.9 L880.4,363.8 L884.2,366.7 L888.0,369.6 M690.1,237.4 L692.8,240.8 L695.6,244.2 L698.3,247.6 L701.1,251.0 L703.8,254.5 L706.6,257.9 L709.3,261.2 L712.0,264.5 L714.7,267.8 L717.3,270.9 L719.9,274.0 L722.6,277.0 L725.2,280.1 L727.8,283.0 L730.4,285.9 L733.0,288.8 L735.4,291.6 L737.8,294.2 L740.1,296.8 L742.3,299.3 L744.3,301.6 L746.1,303.8 L747.8,305.8 L749.4,307.8 L751.0,309.7 L752.5,311.5 L754.1,313.4 L755.8,315.3 L757.6,317.2 L759.6,319.3 L761.7,321.4 L763.9,323.5 L766.1,325.6 L768.3,327.6 L770.7,329.8 L773.1,332.0 L775.7,334.3 L778.5,336.7 L781.3,339.3 L784.4,342.0 L787.7,344.9 L791.2,348.1 L794.8,351.4 L798.7,354.8 L802.6,358.3 L806.6,361.9 L810.6,365.5 L814.7,369.0 L818.7,372.5 L822.7,375.9 L826.6,379.2 L830.6,382.5 L834.6,385.8 L838.7,389.0 L842.7,392.3 L846.8,395.5 L850.8,398.8 L854.9,402.0 L859.0,405.2 L863.0,408.5" fill="none" stroke="#f4f4f4" stroke-width="1.0"/>
<path d="M821.7,130.7 L820.4,131.7 L819.1,132.7 L817.7,133.7 L816.4,134.8 L815.1,135.8 L813.8,136.8 L812.4,137.8 L811.1,138.9 L809.8,139.9 L808.4,141.0 L807.0,142.1 L805.7,143.2 L804.3,144.4 L802.9,145.5 L801.5,146.7 L800.1,147.9 L798.7,149.1 L797.2,150.3 L795.8,151.5 L794.3,152.7 L792.8,154.0 L791.3,155.2 L789.7,156.5 L788.1,157.8 L786.5,159.2 L784.9,160.5 L783.3,161.8 L781.7,163.1 L780.1,164.4 L778.6,165.7 L777.2,166.9 L775.9,167.9 L774.7,168.9 L773.5,169.9 L772.3,170.8 L771.0,171.9 L769.6,173.1 L767.9,174.4 L765.9,176.0 L763.6,177.8 L760.9,179.9 L757.9,182.3 L754.6,184.8 L751.0,187.5 L747.3,190.4 L743.5,193.3 L739.7,196.3 L735.8,199.4 L731.9,202.4 L728.2,205.4 L724.5,208.4 L720.8,211.5 L717.0,214.7 L713.2,217.9 L709.3,221.1 L705.5,224.4 L701.6,227.7 L697.8,230.9 L693.9,234.2 L690.1,237.4 M821.7,130.7 L823.4,133.8 L825.1,137.0 L826.7,140.1 L828.4,143.3 L830.1,146.5 L831.8,149.6 L833.5,152.7 L835.2,155.8 L836.8,158.8 L838.5,161.7 L840.2,164.6 L841.9,167.4 L843.6,170.2 L845.3,173.0 L847.1,175.8 L848.8,178.4 L850.4,181.0 L852.0,183.5 L853.5,185.9 L855.0,188.2 L856.3,190.3 L857.5,192.3 L858.7,194.2 L859.7,196.0 L860.7,197.7 L861.8,199.4 L862.9,201.1 L864.0,202.7 L865.3,204.4 L866.8,206.2 L868.4,208.0 L869.9,209.7 L871.6,211.4 L873.3,213.1 L875.1,214.8 L877.0,216.6 L879.0,218.4 L881.1,220.3 L883.4,222.3 L885.9,224.4 L888.6,226.7 L891.5,229.1 L894.5,231.7 L897.7,234.3 L901.0,237.0 L904.4,239.7 L907.8,242.4 L911.2,245.1 L914.6,247.7 L917.9,250.2 L921.2,252.6 L924.4,255.0 L927.7,257.3 L931.1,259.6 L934.4,261.9 L937.7,264.2 L941.0,266.5 L944.4,268.7 L947.7,271.0 L951.0,273.3 M690.1,237.4 L692.8,240.8 L695.6,244.2 L698.3,247.6 L701.1,251.0 L703.8,254.5 L706.6,257.9 L709.3,261.2 L712.0,264.5 L714.7,267.8 L717.3,270.9 L719.9,274.0 L722.6,277.0 L725.2,280.1 L727.8,283.0 L730.4,285.9 L733.0,288.8 L735.4,291.6 L737.8,294.2 L740.1,296.8 L742.3,299.3 L744.3,301.6 L746.1,303.8 L747.8,305.8 L749.4,307.8 L751.0,309.7 L752.5,311.5 L754.1,313.4 L755.8,315.3 L757.6,317.2 L759.6,319.3 L761.7,321.4 L763.9,323.5 L766.1,325.6 L768.3,327.6 L770.7,329.8 L773.1,332.0 L775.7,334.3 L778.5,336.7 L781.3,339.3 L784.4,342.0 L787.7,344.9 L791.2,348.1 L794.8,351.4 L798.7,354.8 L802.6,358.3 L806.6,361.9 L810.6,365.5 L814.7,369.0 L818.7,372.5 L822.7,375.9 L826.6,379.2 L830.6,382.5 L834.6,385.8 L838.7,389.0 L842.7,392.3 L846.8,395.5 L850.8,398.8 L854.9,402.0 L859.0,405.2 L863.0,408.5 M951.0,273.3 L950.1,274.6 L949.3,276.0 L948.5,277.3 L947.6,278.6 L946.8,280.0 L945.9,281.3 L945.1,282.7 L944.2,284.0 L943.3,285.4 L942.4,286.8 L941.5,288.2 L940.5,289.6 L939.5,291.1 L938.5,292.5 L937.5,293.9 L936.5,295.4 L935.5,296.9 L934.5,298.4 L933.4,299.9 L932.4,301.4 L931.4,302.9 L930.3,304.5 L929.3,306.1 L928.2,307.7 L927.2,309.3 L926.1,310.9 L925.0,312.5 L924.0,314.1 L922.9,315.7 L921.9,317.3 L920.9,318.8 L920.1,320.1 L919.3,321.4 L918.5,322.6 L917.7,323.9 L916.9,325.3 L915.9,326.8 L914.8,328.6 L913.5,330.7 L911.9,333.1 L910.1,335.9 L908.0,339.0 L905.8,342.5 L903.4,346.1 L900.9,349.9 L898.3,353.8 L895.7,357.8 L893.1,361.8 L890.5,365.8 L888.0,369.6 L885.5,373.4 L883.1,377.2 L880.6,381.1 L878.1,385.0 L875.6,388.9 L873.1,392.8 L870.5,396.8 L868.0,400.7 L865.5,404.6 L863.0,408.5" fill="none" stroke="#ffffff" stroke-width="1.8"/>
<circle cx="821.7" cy="130.7" r="3.2" fill="#dede10"/>
<circle cx="808.4" cy="141.0" r="3.2" fill="#dede10"/>
<circle cx="794.3" cy="152.7" r="3.2" fill="#dede10"/>
<circle cx="778.6" cy="165.7" r="3.2" fill="#dede10"/>
<circle cx="763.6" cy="177.8" r="3.2" fill="#dede10"/>
<circle cx="728.2" cy="205.4" r="3.2" fill="#dede10"/>
<circle cx="690.1" cy="237.4" r="3.2" fill="#dede10"/>
<circle cx="838.5" cy="161.7" r="3.2" fill="#dede10"/>
<circle cx="826.5" cy="172.5" r="3.2" fill="#dede10"/>
<circle cx="813.3" cy="184.4" r="3.2" fill="#dede10"/>
<circle cx="798.6" cy="197.5" r="3.2" fill="#dede10"/>
<circle cx="784.8" cy="209.7" r="3.2" fill="#dede10"/>
<circle cx="752.5" cy="238.7" r="3.2" fill="#dede10"/>
<circle cx="717.3" cy="270.9" r="3.2" fill="#dede10"/>
<circle cx="855.0" cy="188.2" r="3.2" fill="#dede10"/>
<circle cx="843.6" cy="199.0" r="3.2" fill="#dede10"/>
<circle cx="831.5" cy="211.8" r="3.2" fill="#dede10"/>
<circle cx="817.5" cy="225.5" r="3.2" fill="#dede10"/>
<circle cx="804.7" cy="238.2" r="3.2" fill="#dede10"/>
<circle cx="774.8" cy="268.2" r="3.2" fill="#dede10"/>
<circle cx="742.3" cy="299.3" r="3.2" fill="#dede10"/>
<circle cx="866.8" cy="206.2" r="3.2" fill="#dede10"/>
<circle cx="855.5" cy="217.3" r="3.2" fill="#dede10"/>
<circle cx="843.6" cy="229.5" r="3.2" fill="#dede10"/>
<circle cx="830.8" cy="243.5" r="3.2" fill="#dede10"/>
<circle cx="818.7" cy="256.1" r="3.2" fill="#dede10"/>
<circle cx="790.7" cy="286.5" r="3.2" fill="#dede10"/>
<circle cx="759.6" cy="319.3" r="3.2" fill="#dede10"/>
<circle cx="885.9" cy="224.4" r="3.2" fill="#dede10"/>
<circle cx="875.4" cy="236.1" r="3.2" fill="#dede10"/>
<circle cx="864.3" cy="248.8" r="3.2" fill="#dede10"/>
<circle cx="851.7" cy="263.5" r="3.2" fill="#dede10"/>
<circle cx="840.5" cy="276.8" r="3.2" fill="#dede10"/>
<circle cx="812.6" cy="308.4" r="3.2" fill="#dede10"/>
<circle cx="784.4" cy="342.0" r="3.2" fill="#dede10"/>
<circle cx="917.9" cy="250.2" r="3.2" fill="#dede10"/>
<circle cx="908.0" cy="262.7" r="3.2" fill="#dede10"/>
<circle cx="898.0" cy="276.8" r="3.2" fill="#dede10"/>
<circle cx="886.4" cy="291.9" r="3.2" fill="#dede10"/>
<circle cx="875.4" cy="306.0" r="3.2" fill="#dede10"/>
<circle cx="850.1" cy="340.3" r="3.2" fill="#dede10"/>
<circle cx="822.7" cy="375.9" r="3.2" fill="#0000b8"/>
<circle cx="951.0" cy="273.3" r="3.2" fill="#dede10"/>
<circle cx="942.4" cy="286.8" r="3.2" fill="#0000b8"/>
<circle cx="932.4" cy="301.4" r="3.2" fill="#dede10"/>
<circle cx="921.9" cy="317.3" r="3.2" fill="#0000b8"/>
<circle cx="911.9" cy="333.1" r="3.2" fill="#dede10"/>
<circle cx="888.0" cy="369.6" r="3.2" fill="#dede10"/>
<circle cx="863.0" cy="408.5" r="3.2" fill="#dede10"/>
  <g font-family="Liberation Sans" font-size="8" fill="#ffffff" opacity="0.4" text-anchor="middle">
   <text transform="translate(831,113) rotate(-50)">30.70</text>
   <text transform="translate(832,141) rotate(-50)" opacity="0.7">28.6</text>
   <text transform="translate(827,191) rotate(-50)" opacity="0.5">25.1</text>
   <text transform="translate(828,207) rotate(-50)" opacity="0.5">22.4</text>
  </g>
  <text x="0" y="0" transform="translate(769,372) rotate(218)" text-anchor="middle" dominant-baseline="middle" font-family="Liberation Sans" font-size="12" fill="#f2f2f2">Zoom</text>
  <text x="0" y="0" transform="translate(941,341) rotate(-55)" text-anchor="middle" dominant-baseline="middle" font-family="Liberation Sans" font-size="12" fill="#f2f2f2">Focus</text>
  </svg>
 </div>
 <div class="a" style="left:425px;top:403px;width:836px;height:6px;background:#7f8182"></div>
 <div class="a" style="left:425px;top:409px;width:836px;height:32px;background:#5f6366"></div>
 <div class="a" style="left:445px;top:419px">Zoom :&nbsp; 0&nbsp;&nbsp; Focus :&nbsp; 0</div>
 <div class="a" style="left:425px;top:441px;width:836px;height:5px;background:#808284"></div>
 <div class="a" style="left:425px;top:446px;width:836px;height:20px;background:#3d3e40"><div class="a" style="left:5px;top:2px;font-size:16px">fovx</div></div>
 <div class="a" style="left:425px;top:466px;width:836px;height:332px;background:#a2a2a2"></div>
 <svg class="a" style="left:0;top:-2px" width="1263" height="803">
  <path d="M480.0,488.3 H1250.7 M480.0,503.4 H1250.7 M480.0,518.5 H1250.7 M480.0,533.5 H1250.7 M480.0,548.6 H1250.7 M480.0,563.7 H1250.7 M480.0,578.8 H1250.7 M480.0,593.9 H1250.7 M480.0,608.9 H1250.7 M480.0,624.0 H1250.7 M480.0,639.1 H1250.7 M480.0,654.2 H1250.7 M480.0,669.3 H1250.7 M480.0,684.3 H1250.7 M480.0,699.4 H1250.7 M480.0,714.5 H1250.7 M480.0,729.6 H1250.7 M480.0,744.7 H1250.7 M480.0,759.7 H1250.7 M480.0,774.8 H1250.7 M480.0,789.9 H1250.7 M480.0,488.3 V789.9 M557.1,488.3 V789.9 M634.1,488.3 V789.9 M711.2,488.3 V789.9 M788.3,488.3 V789.9 M865.4,488.3 V789.9 M942.4,488.3 V789.9 M1019.5,488.3 V789.9 M1096.6,488.3 V789.9 M1173.6,488.3 V789.9 M1250.7,488.3 V789.9" stroke="#e4e4e4" stroke-width="1.7" fill="none"/>
<rect x="478.5" y="487.3" width="3" height="303.6" fill="#f4f4f4"/>
<g font-family="Liberation Sans" font-size="11.5" fill="#111"><text x="475" y="484.7" text-anchor="end">100,00</text><text x="475" y="499.8" text-anchor="end">90,00</text><text x="475" y="514.9" text-anchor="end">80,00</text><text x="475" y="529.9" text-anchor="end">70,00</text><text x="475" y="545.0" text-anchor="end">60,00</text><text x="475" y="560.1" text-anchor="end">50,00</text><text x="475" y="575.2" text-anchor="end">40,00</text><text x="475" y="590.3" text-anchor="end">30,00</text><text x="475" y="605.3" text-anchor="end">20,00</text><text x="475" y="620.4" text-anchor="end">10,00</text><text x="475" y="635.5" text-anchor="end">0,00</text><text x="475" y="650.6" text-anchor="end">-10,00</text><text x="475" y="665.7" text-anchor="end">-20,00</text><text x="475" y="680.7" text-anchor="end">-30,00</text><text x="475" y="695.8" text-anchor="end">-40,00</text><text x="475" y="710.9" text-anchor="end">-50,00</text><text x="475" y="726.0" text-anchor="end">-60,00</text><text x="475" y="741.1" text-anchor="end">-70,00</text><text x="475" y="756.1" text-anchor="end">-80,00</text><text x="475" y="771.2" text-anchor="end">-90,00</text><text x="475" y="786.3" text-anchor="end">-100,00</text></g>
<path d="M479.9,558.4 L489.7,561.1 L499.4,563.6 L509.2,566.1 L518.9,568.6 L528.7,570.9 L538.4,573.2 L548.2,575.4 L558.0,577.5 L567.7,579.6 L577.5,581.5 L587.2,583.4 L597.0,585.2 L606.7,587.0 L616.5,588.7 L626.3,590.3 L636.0,591.9 L645.8,593.5 L655.5,595.1 L665.3,596.6 L675.0,598.2 L684.8,599.7 L694.6,601.2 L704.3,602.7 L714.1,604.1 L723.8,605.5 L733.6,606.8 L743.3,608.0 L753.1,609.2 L762.9,610.2 L772.6,611.2 L782.4,612.1 L792.1,613.0 L801.9,613.7 L811.6,614.5 L821.4,615.2 L831.2,615.8 L840.9,616.4 L850.7,617.0 L860.4,617.6 L870.2,618.2 L879.9,618.8 L889.7,619.3 L899.4,619.9 L909.2,620.4 L919.0,620.9 L928.7,621.5 L938.5,622.0 L948.2,622.5 L958.0,623.0 L967.7,623.5 L977.5,624.0 L987.3,624.4 L997.0,624.9 L1006.8,625.3 L1016.5,625.8 L1026.3,626.2 L1036.0,626.6 L1045.8,627.0 L1055.6,627.4 L1065.3,627.8 L1075.1,628.2 L1084.8,628.5 L1094.6,628.8 L1104.3,629.2 L1114.1,629.5 L1123.9,629.8 L1133.6,630.1 L1143.4,630.4 L1153.1,630.6 L1162.9,630.9 L1172.6,631.2 L1182.4,631.4 L1192.2,631.7 L1201.9,631.9 L1211.7,632.1 L1221.4,632.4 L1231.2,632.6 L1240.9,632.8 L1250.7,633.0" stroke="#8cbcf0" stroke-width="3.2" fill="none" transform="translate(0.3,0.7)"/>
<path d="M479.9,558.4 L489.7,561.1 L499.4,563.6 L509.2,566.1 L518.9,568.6 L528.7,570.9 L538.4,573.2 L548.2,575.4 L558.0,577.5 L567.7,579.6 L577.5,581.5 L587.2,583.4 L597.0,585.2 L606.7,587.0 L616.5,588.7 L626.3,590.3 L636.0,591.9 L645.8,593.5 L655.5,595.1 L665.3,596.6 L675.0,598.2 L684.8,599.7 L694.6,601.2 L704.3,602.7 L714.1,604.1 L723.8,605.5 L733.6,606.8 L743.3,608.0 L753.1,609.2 L762.9,610.2 L772.6,611.2 L782.4,612.1 L792.1,613.0 L801.9,613.7 L811.6,614.5 L821.4,615.2 L831.2,615.8 L840.9,616.4 L850.7,617.0 L860.4,617.6 L870.2,618.2 L879.9,618.8 L889.7,619.3 L899.4,619.9 L909.2,620.4 L919.0,620.9 L928.7,621.5 L938.5,622.0 L948.2,622.5 L958.0,623.0 L967.7,623.5 L977.5,624.0 L987.3,624.4 L997.0,624.9 L1006.8,625.3 L1016.5,625.8 L1026.3,626.2 L1036.0,626.6 L1045.8,627.0 L1055.6,627.4 L1065.3,627.8 L1075.1,628.2 L1084.8,628.5 L1094.6,628.8 L1104.3,629.2 L1114.1,629.5 L1123.9,629.8 L1133.6,630.1 L1143.4,630.4 L1153.1,630.6 L1162.9,630.9 L1172.6,631.2 L1182.4,631.4 L1192.2,631.7 L1201.9,631.9 L1211.7,632.1 L1221.4,632.4 L1231.2,632.6 L1240.9,632.8 L1250.7,633.0" stroke="#ffffff" stroke-width="2.6" fill="none"/>
<circle cx="479.9" cy="558.7" r="4.6" fill="#ffff00" stroke="#000" stroke-width="1.4"/>
<circle cx="569.8" cy="579.5" r="4.6" fill="#ffff00" stroke="#000" stroke-width="1.4"/>
<circle cx="670" cy="596.7" r="4.6" fill="#ffff00" stroke="#000" stroke-width="1.4"/>
<circle cx="743.9" cy="609.5" r="4.6" fill="#ffff00" stroke="#000" stroke-width="1.4"/>
<circle cx="864.7" cy="617.7" r="4.6" fill="#ffff00" stroke="#000" stroke-width="1.4"/>
<circle cx="1060.1" cy="627" r="4.6" fill="#ffff00" stroke="#000" stroke-width="1.4"/>
<circle cx="1250.7" cy="633.3" r="4.6" fill="#ffff00" stroke="#000" stroke-width="1.4"/>
 </svg>
 <div class="a btn" style="left:590px;top:415px;width:26px;height:20px"></div>
 <div class="a btn" style="left:616px;top:415px;width:26px;height:20px"></div>
 <div class="a btn" style="left:642px;top:415px;width:26px;height:20px"></div>
 <div class="a inp" style="left:668px;top:415px;width:51px;height:20px;border-radius:2px"><div class="a" style="left:1px;top:3px">0</div></div>
 <div class="a btn" style="left:718px;top:415px;width:26px;height:20px"></div>
 <div class="a btn" style="left:744px;top:415px;width:26px;height:20px"></div>
 <div class="a btn" style="left:770px;top:415px;width:26px;height:20px"></div>
 <div class="a" style="left:797px;top:418px;width:14px;height:14px;background:#585c5f;border:1px solid #2b2e30;border-radius:2px"></div>
 <div class="a" style="left:815px;top:419px;letter-spacing:-0.3px">Used</div>
 <div class="a dbtn" style="left:842px;width:65px"><div class="a t" style="left:26px">Delete</div></div>
 <div class="a dbtn" style="left:907px;width:60px"><div class="a t" style="left:26px">Undo</div></div>
 <div class="a dbtn" style="left:967px;width:58px"><div class="a t" style="left:26px">Redo</div></div>
 <div class="a btn" style="left:1025px;top:415px;width:90px;height:20px"><div class="a t" style="left:4px;top:3px;letter-spacing:0">Add Horizontal</div></div>
 <div class="a btn" style="left:1115px;top:415px;width:74px;height:20px"><div class="a t" style="left:4px;top:3px;letter-spacing:0">Add Vertical</div></div>
 <div class="a btn" style="left:1181px;top:447px;width:80px;height:19px"><div class="a t" style="left:23px;top:3px;letter-spacing:0">Zoom</div></div>
 <svg class="a" style="left:0;top:-2px" width="1263" height="470">
  <g fill="#dcdcdc">
   <path d="M594.5,427 L600.5,422 V432 Z M600,427 L606,422 V432 Z M605.5,427 L611.5,422 V432 Z"/>
   <path d="M622.5,427 L628.5,422 V432 Z M628,427 L634,422 V432 Z"/>
   <path d="M652,427 L658,422 V432 Z"/>
   <path d="M734.5,427 L728.5,422 V432 Z"/>
   <path d="M763.5,427 L757.5,422 V432 Z M758,427 L752,422 V432 Z"/>
   <path d="M791.5,427 L785.5,422 V432 Z M786,427 L780,422 V432 Z M780.5,427 L774.5,422 V432 Z"/>
   <circle cx="855" cy="427" r="8" fill="#8e9193"/>
  </g>
  <path d="M851.2,423.2 L858.8,430.8 M858.8,423.2 L851.2,430.8" stroke="#5a5e61" stroke-width="2.2"/>
  <g fill="none" stroke="#dadada" stroke-width="1.8">
   <path d="M914.5,423.5 A6,6 0 1 1 924.5,431"/>
   <path d="M913,421.3 V426.7 H918.3"/>
   <path d="M983.9,423.5 A6,6 0 1 0 973.9,431"/>
   <path d="M985.4,421.3 V426.7 H980.1"/>
  </g>
  <path d="M921.2,431.8 V435 M919.6,433.4 H922.8 M978.9,431.8 V435 M977.3,433.4 H980.5" stroke="#dadada" stroke-width="1"/>
 </svg>

</div>
</body></html>
